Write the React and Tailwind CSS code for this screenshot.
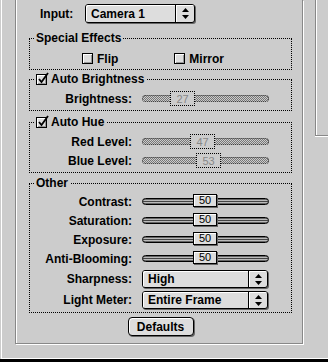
import React from "react";

const Checkbox = ({ checked }) => (
  <span className="relative inline-block w-[11px] h-[11px] border border-black bg-[#dddddd] shadow-[inset_1px_1px_0_#ffffff,inset_-1px_-1px_0_#999999] shrink-0">
    {checked && (
      <svg className="absolute left-[0px] top-[-3px]" width="13" height="13" viewBox="0 0 13 13">
        <path d="M2 7 L4.5 10 L11 1" fill="none" stroke="#000" strokeWidth="1.8" />
      </svg>
    )}
  </span>
);

const Arrows = () => (
  <svg width="7" height="11" viewBox="0 0 7 11">
    <path d="M3.5 0 L7 4 L0 4 Z" fill="#000" />
    <path d="M0 7 L7 7 L3.5 11 Z" fill="#000" />
  </svg>
);

const Popup = ({ value, w, h = "h-[18px]" }) => (
  <div className={`${w} ${h} flex items-stretch border border-black rounded-[3px] bg-[#dddddd] shadow-[1px_1px_0_#666666]`}>
    <div className="flex-1 flex items-center pl-[5px] shadow-[inset_1px_1px_0_#ffffff] rounded-l-[2px]">{value}</div>
    <div className="w-[19px] flex items-center justify-center border-l border-black shadow-[inset_1px_1px_0_#ffffff] rounded-r-[2px]">
      <Arrows />
    </div>
  </div>
);

const Slider = ({ value, disabled }) => (
  <div className="relative w-[127px] h-[15px] flex items-center">
    {disabled ? (
      <div className="w-full h-[7px] rounded-full border border-dotted border-[#333333] bg-[repeating-conic-gradient(#777777_0_25%,#cccccc_0_50%)] bg-[length:2px_2px]" />
    ) : (
      <div className="w-full h-[7px] rounded-full border border-black bg-[linear-gradient(#666666_0,#666666_1px,#bbbbbb_1px,#bbbbbb_2px,#444444_2px,#444444_3px,#bbbbbb_3px,#bbbbbb_4px,#666666_4px)]" />
    )}
    {disabled ? (
      <div
        className="absolute top-[0px] w-[25px] h-[15px] border border-dotted border-black bg-[#cccccc] flex items-center justify-center font-normal text-[11px] text-[#888888]"
        style={{ left: value + 1 }}
      >
        {value}
      </div>
    ) : (
      <div
        className="absolute top-[0px] w-[24px] h-[13px] border border-black bg-[#dddddd] shadow-[1px_1px_0_#666666,inset_1px_1px_0_#ffffff] flex items-center justify-center font-normal text-[11px] leading-[11px] text-black"
        style={{ left: value + 1 }}
      >
        {value}
      </div>
    )}
  </div>
);

const Row = ({ label, children }) => (
  <div className="flex items-center h-[19px]">
    <div className="w-[102px] text-right">{label}</div>
    <div className="ml-[10px]">{children}</div>
  </div>
);

const Group = ({ title, check, h, mt, children }) => (
  <fieldset className={`${h} ${mt} ml-[13px] w-[263px] border border-dotted border-black p-0`}>
    <legend className="ml-[4px] px-[2px] leading-[13px] flex items-center gap-[4px]">
      {check && <Checkbox checked />}
      {title}
    </legend>
    {children}
  </fieldset>
);

export default function App() {
  return (
    <div className="w-[328px] h-[362px] bg-[#cccccc] overflow-hidden flex flex-col font-['Liberation_Sans',Arial,sans-serif] text-[12px] leading-[14px] font-bold text-black">
      <div className="h-[359px] flex ml-[1px] border-l border-white shadow-[inset_0_-1px_0_#ffffff]">
        <div className="ml-[13px] w-[288px] h-[344px] border border-t-0 border-[#888888] shadow-[inset_1px_0_0_#ffffff,1px_1px_0_#ffffff] flex flex-col">
          <div className="flex items-center pt-[4px]">
            <div className="ml-[24px] w-[37px]">Input:</div>
            <div className="ml-[8px]">
              <Popup value="Camera 1" w="w-[110px]" h="h-[19px]" />
            </div>
          </div>

          <Group title="Special Effects" h="h-[38px]" mt="mt-[9px]">
            <div className="flex items-center h-[19px] mt-[4px]">
              <div className="ml-[52px] flex items-center gap-[4px]">
                <Checkbox />
                <span>Flip</span>
              </div>
              <div className="ml-[56px] flex items-center gap-[4px]">
                <Checkbox />
                <span>Mirror</span>
              </div>
            </div>
          </Group>

          <Group title="Auto Brightness" check h="h-[38px]" mt="mt-[3px]">
            <div className="mt-[3px]">
              <Row label="Brightness:">
                <Slider value={27} disabled />
              </Row>
            </div>
          </Group>

          <Group title="Auto Hue" check h="h-[57px]" mt="mt-[5px]">
            <div className="mt-[3px]">
              <Row label="Red Level:">
                <Slider value={47} disabled />
              </Row>
              <Row label="Blue Level:">
                <Slider value={53} disabled />
              </Row>
            </div>
          </Group>

          <Group title="Other" h="h-[136px]" mt="mt-[4px]">
            <div className="mt-[2px]">
              <Row label="Contrast:">
                <Slider value={50} />
              </Row>
              <Row label="Saturation:">
                <Slider value={50} />
              </Row>
              <Row label="Exposure:">
                <Slider value={50} />
              </Row>
              <Row label="Anti-Blooming:">
                <Slider value={50} />
              </Row>
              <div className="flex items-center h-[18px] mt-[2px]">
                <div className="w-[102px] text-right">Sharpness:</div>
                <div className="ml-[10px]">
                  <Popup value="High" w="w-[126px]" />
                </div>
              </div>
              <div className="flex items-center h-[18px] mt-[3px]">
                <div className="w-[102px] text-right">Light Meter:</div>
                <div className="ml-[10px]">
                  <Popup value="Entire Frame" w="w-[126px]" />
                </div>
              </div>
            </div>
          </Group>

          <div className="flex justify-center mt-[4px] pl-[3px]">
            <button className="w-[66px] h-[19px] border border-black rounded-[4px] bg-[#dddddd] shadow-[1px_1px_0_#666666,inset_1px_1px_0_#ffffff] font-bold">
              Defaults
            </button>
          </div>
        </div>
        <div className="ml-[12px] flex-1 h-[136px] border-l border-b border-[#888888] shadow-[inset_1px_0_0_#ffffff,0_1px_0_#ffffff]" />
      </div>
      <div className="flex-1 bg-black" />
    </div>
  );
}
